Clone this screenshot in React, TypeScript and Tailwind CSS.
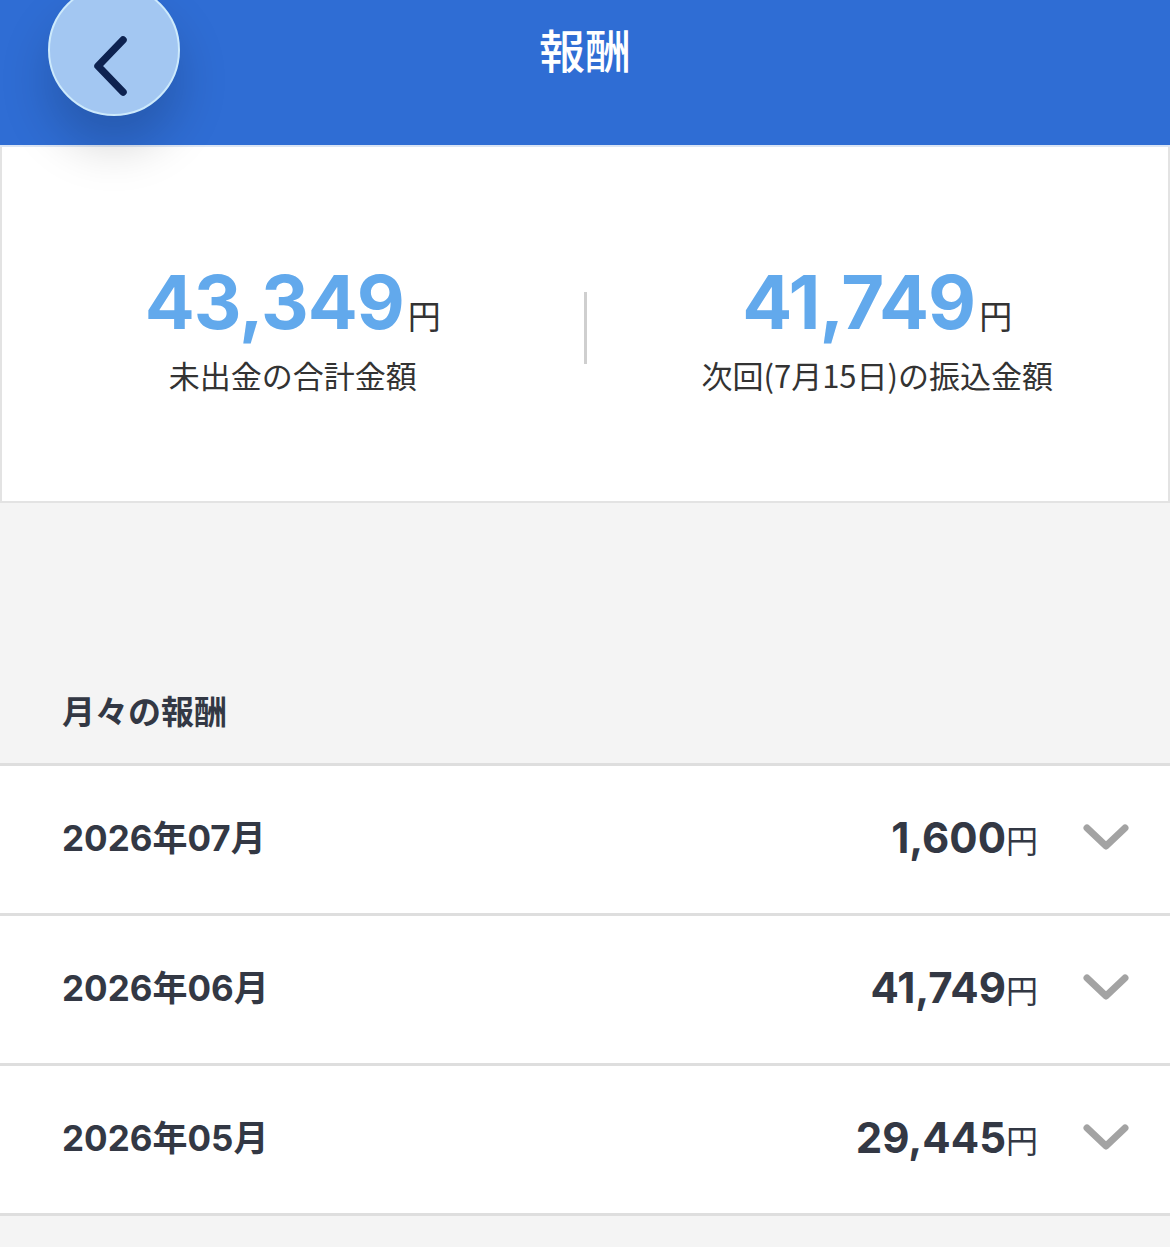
import React from 'react';

const rows = [
  { month: '2026年07月', amount: '1,600' },
  { month: '2026年06月', amount: '41,749' },
  { month: '2026年05月', amount: '29,445' },
];

const jp = { fontFamily: '"Noto Sans CJK JP", "Noto Sans", sans-serif' };
const num = { fontFamily: 'Inter, "Noto Sans CJK JP", sans-serif' };

const Chevron = ({ className }: { className?: string }) => (
  <svg viewBox="0 0 48 32" className={className} fill="none">
    <path d="M5 6 L24 24 L43 6" stroke="currentColor" strokeWidth="7" strokeLinecap="round" strokeLinejoin="round" />
  </svg>
);

const Stat = ({ value, label }: { value: string; label: string }) => (
  <div className="flex flex-col items-center">
    <div className="flex items-baseline">
      <span style={num} className="text-[74px] leading-none font-bold tracking-[-1px] text-[#62a9ec]">{value}</span>
      <span style={jp} className="ml-1 text-[33px] leading-none text-[#333]">円</span>
    </div>
    <div style={jp} className="mt-[20px] text-[31px] leading-none text-[#333]">{label}</div>
  </div>
);

export default function App() {
  return (
    <div className="w-[1170px] h-[1247px] bg-[#f4f4f4] overflow-hidden" style={jp}>
      <header className="relative h-[147px] bg-[#2f6dd4] border-b-2 border-[#dbe5f4] flex items-center justify-center">
        <button className="absolute left-[48px] top-[-16px] w-[132px] h-[132px] rounded-full bg-[#a3c7f2] border-2 border-[#cdeafc] flex items-center justify-center shadow-[0_30px_50px_rgba(0,0,0,0.18)] z-10">
          <svg viewBox="0 0 40 64" className="w-[40px] h-[64px] ml-[-10px] mt-[32px]" fill="none">
            <path d="M34 6 L9 32 L34 58" stroke="#0d2250" strokeWidth="7.5" strokeLinecap="round" strokeLinejoin="round" />
          </svg>
        </button>
        <h1 className="text-white text-[46px] font-medium mt-[-48px]">報酬</h1>
      </header>

      <section className="bg-white border-2 border-t-0 border-[#e3e3e3] h-[356px] flex items-center pt-[6px]">
        <div className="flex-1 flex justify-center">
          <Stat value="43,349" label="未出金の合計金額" />
        </div>
        <div className="w-[3px] h-[72px] bg-[#cfcfcf] mt-[2px]" />
        <div className="flex-1 flex justify-center">
          <Stat value="41,749" label="次回(7月15日)の振込金額" />
        </div>
      </section>

      <div className="h-[260px] flex items-end px-[62px] pb-[36px]">
        <h2 className="text-[33px] font-bold text-[#333844] leading-none">月々の報酬</h2>
      </div>

      <ul className="bg-white border-t-[3px] border-[#dedede]">
        {rows.map((r) => (
          <li key={r.month} className="h-[150px] flex items-center pl-[62px] pr-[40px] pb-[4px] border-b-[3px] border-[#dedede]">
            <span style={num} className="text-[35px] font-bold text-[#333844] flex-1">
              {r.month.slice(0, 4)}<span style={jp}>年</span>{r.month.slice(5, 7)}<span style={jp}>月</span>
            </span>
            <span className="flex items-baseline">
              <span style={num} className="text-[42px] font-bold text-[#333844] leading-none">{r.amount}</span>
              <span className="text-[32px] text-[#333844] leading-none">円</span>
            </span>
            <Chevron className="w-[48px] h-[32px] ml-[44px] text-[#a3a3a3]" />
          </li>
        ))}
      </ul>
    </div>
  );
}
